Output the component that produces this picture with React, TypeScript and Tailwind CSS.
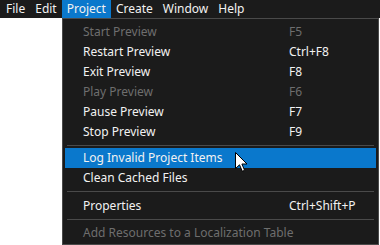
import React from "react";

type Item =
  | { type: "sep"; h: string }
  | { type: "item"; label: string; shortcut?: string; disabled?: boolean; active?: boolean };

const items: Item[] = [
  { type: "item", label: "Start Preview", shortcut: "F5", disabled: true },
  { type: "item", label: "Restart Preview", shortcut: "Ctrl+F8" },
  { type: "item", label: "Exit Preview", shortcut: "F8" },
  { type: "item", label: "Play Preview", shortcut: "F6", disabled: true },
  { type: "item", label: "Pause Preview", shortcut: "F7" },
  { type: "item", label: "Stop Preview", shortcut: "F9" },
  { type: "sep", h: "pt-[3px] pb-[2px]" },
  { type: "item", label: "Log Invalid Project Items", active: true },
  { type: "item", label: "Clean Cached Files" },
  { type: "sep", h: "pt-[3px] pb-[4px]" },
  { type: "item", label: "Properties", shortcut: "Ctrl+Shift+P" },
  { type: "sep", h: "pt-[3px] pb-[3px]" },
  { type: "item", label: "Add Resources to a Localization Table", disabled: true },
];

const menus = ["File", "Edit", "Project", "Create", "Window", "Help"];

export default function App() {
  return (
    <div
      className="relative w-[380px] h-[245px] overflow-hidden bg-white text-[12px]"
      style={{ fontFamily: '"Noto Sans", "Open Sans", sans-serif' }}
    >
      <div className="flex h-[18px] bg-[#1b1b1b] pl-[1px]">
        {menus.map((m) => (
          <div
            key={m}
            className={
              "flex items-center px-[5px] leading-none text-[#f2f2f2] " +
              (m === "Project" ? "bg-[#0a78cc]" : "")
            }
          >
            {m}
          </div>
        ))}
      </div>
      <div className="ml-[62px] w-[317px] border border-[#4a4a4a] bg-[#1b1b1b] px-[2px] pt-[3px] pb-[1px]">
        {items.map((it, i) =>
          it.type === "sep" ? (
            <div key={i} className={"px-[2px] " + it.h}>
              <div className="h-px w-full bg-[#4a4a4a]" />
            </div>
          ) : (
            <div
              key={i}
              className={
                "flex h-[20px] items-center pl-[18px] " +
                (it.active ? "bg-[#0a78cc] " : "") +
                (it.disabled ? "text-[#6e6e6e]" : "text-[#f2f2f2]")
              }
            >
              <span className="w-[206px] whitespace-nowrap">{it.label}</span>
              <span className="whitespace-nowrap">{it.shortcut}</span>
            </div>
          )
        )}
      </div>
      <svg
        className="absolute left-[235px] top-[152px]"
        width="14"
        height="21"
        viewBox="0 0 14 21"
      >
        <path
          d="M0.5 0.5 L0.5 16.5 L4.5 12.8 L7.3 19.3 L9.6 18.3 L6.9 12 L12 12 Z"
          fill="#fff"
          stroke="#000"
          strokeWidth="1"
          strokeLinejoin="miter"
        />
      </svg>
    </div>
  );
}
